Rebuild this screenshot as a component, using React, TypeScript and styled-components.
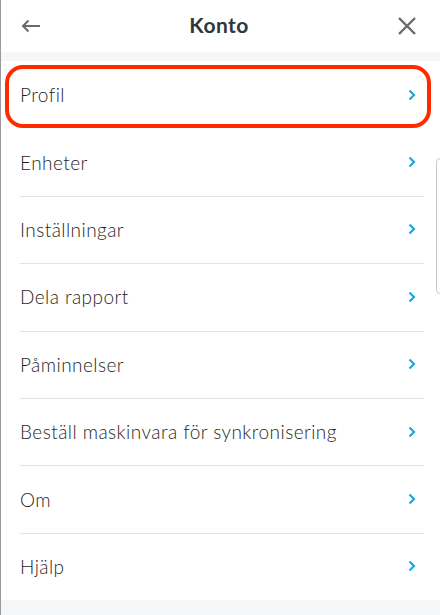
import styled, { createGlobalStyle } from 'styled-components';

const GlobalStyle = createGlobalStyle`
  html, body {
    margin: 0;
    padding: 0;
    background: #f5f6f8;
  }
  body {
    font-family: Lato, "Noto Sans", sans-serif;
    -webkit-font-smoothing: antialiased;
  }
`;

const Screen = styled.div`
  position: relative;
  width: 440px;
  height: 615px;
  overflow: hidden;
  background: #f5f6f8;
  border-left: 1px solid #9a9a9a;
  box-sizing: border-box;
`;

const Header = styled.header`
  height: 52px;
  display: flex;
  align-items: center;
  justify-content: space-between;
  padding: 0 22px 0 19px;
  background: #ffffff;
`;

const IconButton = styled.button`
  display: inline-flex;
  align-items: center;
  justify-content: center;
  width: 22px;
  height: 22px;
  padding: 0;
  border: none;
  background: none;
  color: #6a6a6a;
`;

const Title = styled.h1`
  margin: 0 0 4px;
  font-size: 21px;
  font-weight: 700;
  color: #30373c;
  letter-spacing: 0.02em;
`;

const Gap = styled.div`
  height: 9px;
`;

const List = styled.ul`
  list-style: none;
  margin: 0;
  padding: 0;
  background: #ffffff;
`;

const Row = styled.li<{ $highlight?: boolean }>`
  position: relative;
  height: 67.4px;
  display: flex;
  align-items: center;
  justify-content: space-between;
  padding: 0 24px 0 19px;
  box-sizing: border-box;
  font-size: 19px;
  font-weight: 300;
  letter-spacing: 0.45px;
  color: #1f1f1f;

  & + &::before {
    content: '';
    position: absolute;
    top: 0;
    left: 19px;
    right: 16px;
    height: 1px;
    background: #e3e3e3;
  }

  ${({ $highlight }) =>
    $highlight &&
    `
    &::after {
      content: '';
      position: absolute;
      left: 4px;
      right: 9px;
      top: 4px;
      bottom: 0;
      border: 4px solid #ff2a00;
      border-radius: 18px;
    }
  `}
`;

const Chevron = styled.svg`
  width: 8px;
  height: 12px;
  flex-shrink: 0;
`;

const SideTab = styled.div`
  position: absolute;
  right: -8px;
  top: 158px;
  width: 10px;
  height: 134px;
  border: 1px solid #c9c9c9;
  border-radius: 4px;
  background: transparent;
`;

const items = [
  'Profil',
  'Enheter',
  'Inställningar',
  'Dela rapport',
  'Påminnelser',
  'Beställ maskinvara för synkronisering',
  'Om',
  'Hjälp',
];

export default function App() {
  return (
    <>
      <GlobalStyle />
      <Screen>
        <Header>
          <IconButton aria-label="Tillbaka">
            <svg width="20" height="14" viewBox="0 0 20 14" fill="none" stroke="currentColor" strokeWidth="2">
              <path d="M19 7H2.5M7.5 1.5L2 7l5.5 5.5" />
            </svg>
          </IconButton>
          <Title>Konto</Title>
          <IconButton aria-label="Stäng">
            <svg width="20" height="20" viewBox="0 0 20 20" fill="none" stroke="currentColor" strokeWidth="2.4">
              <path d="M2 2l16 16M18 2L2 18" />
            </svg>
          </IconButton>
        </Header>
        <Gap />
        <List>
          {items.map((label, i) => (
            <Row key={label} $highlight={i === 0}>
              <span>{label}</span>
              <Chevron viewBox="0 0 8 12" fill="none" stroke="#1ea7e1" strokeWidth="2.2">
                <path d="M1.5 1.5L6 6l-4.5 4.5" />
              </Chevron>
            </Row>
          ))}
        </List>
        <SideTab />
      </Screen>
    </>
  );
}
